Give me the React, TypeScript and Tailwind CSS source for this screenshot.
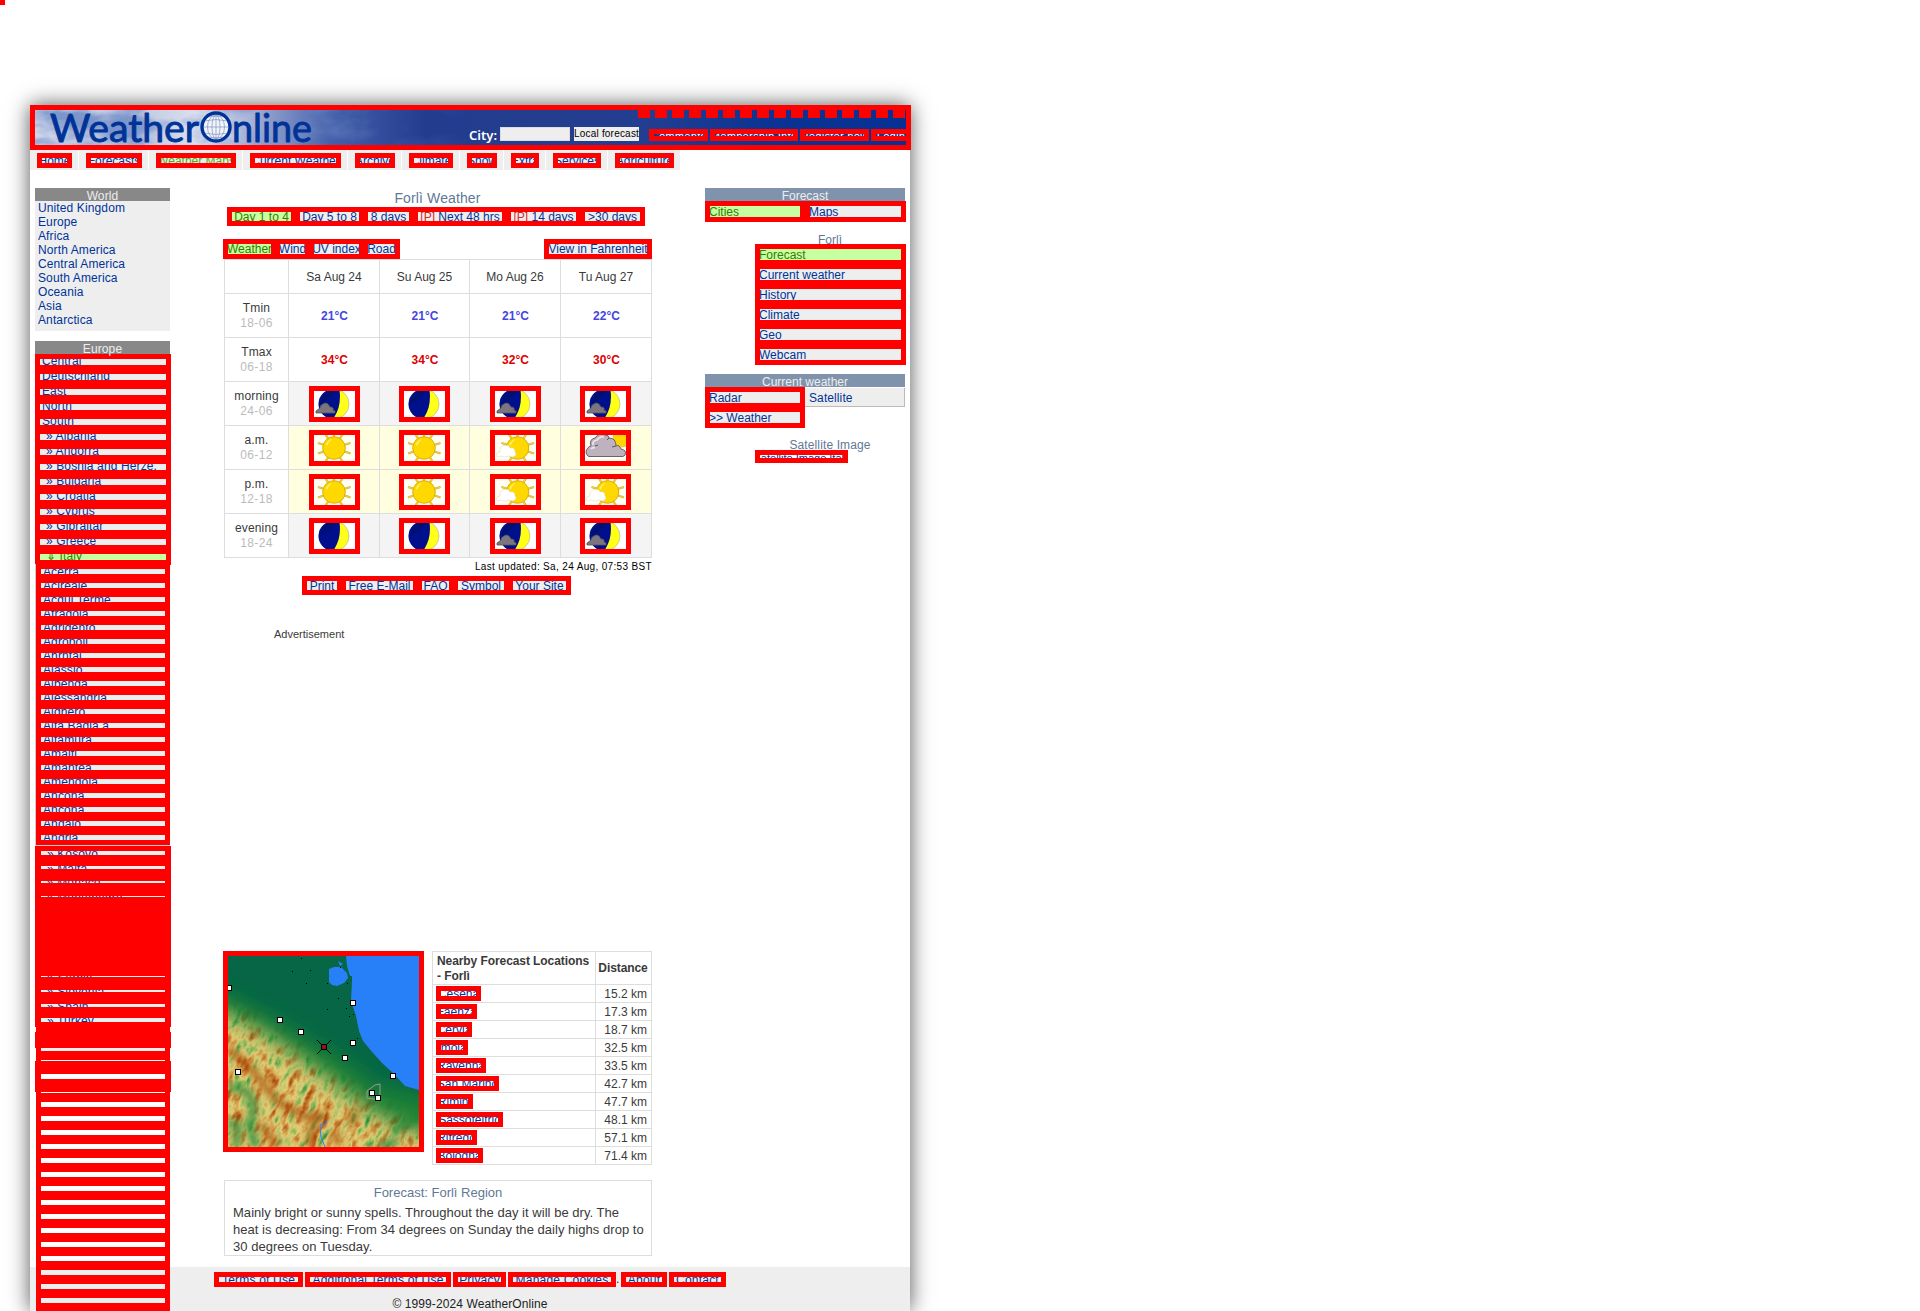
import React from 'react';

type BoxProps = { className?: string; inner?: string; bg?: string; children?: React.ReactNode };

/* Red-framed link; its label is clipped by the frame. */
function Box({ className = '', inner = '', bg = 'bg-[#eee]', children }: BoxProps) {
  return (
    <div className={`flex shrink-0 items-center overflow-hidden border-[5px] border-[#ff0000] ${bg} ${className}`}>
      <span className={`shrink-0 leading-[14px] whitespace-pre ${inner}`}>{children}</span>
    </div>
  );
}

function Strip({ className = '', bg = 'bg-[#eee]', children }: BoxProps) {
  return (
    <div className={`flex shrink-0 items-center justify-center overflow-hidden ${bg} ${className}`}>
      <span className="shrink-0 leading-[14px] whitespace-pre">{children}</span>
    </div>
  );
}

const nav: [string, string, string][] = [
  ['w-[48px]', 'w-[35px]', 'Home'],
  ['w-[69px]', 'w-[56px]', 'Forecasts'],
  ['w-[93px]', 'w-[80px]', 'Weather Maps'],
  ['w-[104px]', 'w-[91px]', 'Current Weather'],
  ['w-[53px]', 'w-[40px]', 'Archive'],
  ['w-[57px]', 'w-[44px]', 'Climate'],
  ['w-[43px]', 'w-[30px]', 'Snow'],
  ['w-[41px]', 'w-[28px]', 'Extra'],
  ['w-[61px]', 'w-[48px]', 'Services'],
  ['w-[72px]', 'w-[59px]', 'Agriculture'],
];

function Logo() {
  return (
    <svg className="h-[35px] w-[871px]" viewBox="0 0 871 35" preserveAspectRatio="none">
      <defs>
        <linearGradient id="sky" x1="0" x2="1" y1="0" y2="0">
          <stop offset="0" stopColor="#dbe0ee" />
          <stop offset="0.1" stopColor="#b9c3df" />
          <stop offset="0.2" stopColor="#dfe4f1" />
          <stop offset="0.27" stopColor="#8c9bcb" />
          <stop offset="0.34" stopColor="#4460ab" />
          <stop offset="0.45" stopColor="#233c8e" />
          <stop offset="0.7" stopColor="#233e90" />
          <stop offset="0.85" stopColor="#0a3393" />
          <stop offset="1" stopColor="#063192" />
        </linearGradient>
        <linearGradient id="fade" x1="0" x2="1" y1="0" y2="0">
          <stop offset="0.1" stopColor="#fff" />
          <stop offset="0.5" stopColor="#000" />
        </linearGradient>
        <mask id="cloudMask"><rect width="871" height="35" fill="url(#fade)" /></mask>
        <filter id="clouds" x="0" y="0" width="100%" height="100%">
          <feTurbulence type="fractalNoise" baseFrequency="0.018 0.035" numOctaves="4" seed="8" />
          <feColorMatrix values="0 0 0 0 0.2  0 0 0 0 0.3  0 0 0 0 0.6  3.4 0 0 0 -1.4" />
        </filter>
        <clipPath id="globe"><circle cx="181" cy="17" r="12" /></clipPath>
      </defs>
      <rect width="871" height="35" fill="url(#sky)" />
      <rect width="871" height="35" filter="url(#clouds)" mask="url(#cloudMask)" />
      <circle cx="181" cy="17" r="13" fill="#f1f4fa" />
      <g clipPath="url(#globe)" fill="none" stroke="#8392c0" strokeWidth="0.7">
        <ellipse cx="181" cy="17" rx="4" ry="12" />
        <ellipse cx="181" cy="17" rx="8.5" ry="12" />
        <path d="M181 4V30M168 17H194M169 11Q181 8 193 11M169 23Q181 26 193 23M172 7Q181 5 190 7M172 27Q181 29 190 27" />
      </g>
      <circle cx="181" cy="17" r="14" fill="none" stroke="#003397" strokeWidth="3.4" />
      <g fill="#003397" stroke="#003397" strokeWidth="0.9" strokeLinejoin="round" fontFamily="Lato" fontSize="38">
        <text x="15" y="32.4" textLength="149" lengthAdjust="spacingAndGlyphs">Weather</text>
        <text x="197" y="32.4" textLength="80" lengthAdjust="spacingAndGlyphs">nline</text>
      </g>
    </svg>
  );
}

function Header() {
  return (
    <header className="relative h-[45px] w-[881px] shrink-0 border-[5px] border-[#ff0000] text-white">
      <Logo />
      <div className="absolute top-0 right-px flex gap-[5px]">
        {Array.from({ length: 16 }, (_, i) => <i key={i} className="h-2 w-3 bg-[#ff0000]" />)}
      </div>
      <div className="absolute top-[17px] left-[434px] flex items-start">
        <b className="w-[31px] font-['Noto_Sans'] text-[13px] leading-[17px] font-semibold whitespace-nowrap">City:</b>
        <div className="h-[14px] w-[70px] border border-[#ddd] bg-[#eee]" />
        <div className="ml-1 h-[14px] w-[65px] bg-[#eee] text-[10px] leading-[14px] tracking-[0.2px] whitespace-nowrap text-black">Local forecast</div>
      </div>
      <div className="absolute top-[19px] left-[614px] flex w-[257px] gap-[2px] overflow-hidden text-[11px] tracking-[0.3px]">
        {[['w-[59px]', 'Comments'], ['w-[88px]', 'Membership Info'], ['w-[69px]', 'Register now'], ['w-[40px]', 'Login']].map(([w, t]) => (
          <Box key={t} bg="bg-[#103592]" className={`h-3 justify-center ${w}`} inner="translate-y-px">{t}</Box>
        ))}
      </div>
    </header>
  );
}

const world = ['United Kingdom', 'Europe', 'Africa', 'North America', 'Central America', 'South America', 'Oceania', 'Asia', 'Antarctica'];
const europe = ['Central', 'Deutschland', 'East', 'North', 'South', '» Albania', '» Andorra', '» Bosnia and Herze.', '» Bulgaria', '» Croatia', '» Cyprus', '» Gibraltar', '» Greece', '⇓ Italy'];
const cities = ['Acerra', 'Acireale', 'Acqui Terme', 'Afragola', 'Agrigento', 'Agropoli', 'Ahrntal', 'Alassio', 'Albenga', 'Alessandria', 'Alghero', 'Alta Badia a', 'Altamura', 'Amalfi', 'Amantea', 'Amendola', 'Ancona', 'Ancona', 'Andalo', 'Andria'];

/* Overlapping rows further down: [spacing above, strip height, label]. */
const overlap: [string, string, string][] = [
  ['mt-[5px]', 'h-[4px]', '» Kosovo'],
  ['mt-[11px]', 'h-[3px]', '» Malta'],
  ['mt-[12px]', 'h-[2px]', '» Monaco'],
  ['mt-[13px]', 'h-px', '» Montenegro'],
  ['mt-[79px]', 'h-px', '» Serbia'],
  ['mt-[13px]', 'h-[2px]', '» Slovenia'],
  ['mt-[12px]', 'h-[3px]', '» Spain'],
  ['mt-[11px]', 'h-[4px]', '» Turkey'],
];

function Sidebar() {
  return (
    <aside className="relative z-10 w-[136px] shrink-0 tracking-[0.12px] text-[#003399]">
      <h3 className="h-[13px] w-[135px] bg-[#888] text-center leading-[16px] text-[#eee]">World</h3>
      <ul className="h-[130px] w-[135px] bg-[#eee] pl-[3px] leading-[14px]">
        {world.map((t) => <li key={t}>{t}</li>)}
      </ul>
      <h3 className="mt-[10px] h-[13px] w-[135px] bg-[#888] text-center leading-[16px] text-[#eee]">Europe</h3>
      {europe.map((t, i) => (
        <Box
          key={t}
          bg={i === 13 ? 'bg-[#c8ffa0]' : 'bg-[#eee]'}
          className={`-mb-px h-4 w-[136px] ${i === 13 ? 'text-[#338000]' : ''}`}
          inner={`-translate-y-px ${i > 4 ? 'pl-[6px]' : 'pl-[2px]'}`}
        >
          {t}
        </Box>
      ))}
      <div className="relative h-[282px] w-[135px] bg-[#ccc] pl-px">
        {cities.map((t, i) => (
          <Box key={i} className="-mb-px h-[15px] w-[134px]" inner="pl-[2px]">{t}</Box>
        ))}
      </div>
      <div className="flex h-[181px] w-[136px] flex-col bg-[#ff0000] px-[6px]">
        {overlap.map(([mt, h, t]) => (
          <div key={t} className={`flex w-[124px] shrink-0 items-center overflow-hidden bg-[#eee] ${mt} ${h}`}>
            <span className="shrink-0 translate-y-px pl-[6px] leading-[14px] whitespace-pre">{t}</span>
          </div>
        ))}
      </div>
      <div className="ml-px h-[5px] w-[134px] bg-[#ff0000]" />
      <div className="h-4 w-[136px] bg-[#ff0000]" />
      <div className="ml-px flex h-[13px] w-[134px] flex-col justify-between bg-[#ff0000] px-[5px]">
        <i className="h-[3px] bg-[#eee]" />
        <i className="h-px bg-white" />
      </div>
      <div className="h-[31px] w-[136px] bg-[#ff0000] px-[6px] pt-[13px]"><i className="block h-[5px] bg-white" /></div>
      <div className="ml-px h-[10px] w-[134px] bg-[#ff0000] px-[5px]"><i className="block h-px bg-white" /></div>
      {Array.from({ length: 15 }, (_, i) => (
        <div key={i} className="ml-px h-[14px] w-[134px] bg-[#ff0000] px-[5px]">
          <i className={`block h-[5px] ${i > 11 ? 'bg-[#eee]' : 'bg-white'}`} />
        </div>
      ))}
    </aside>
  );
}

type Kind = 'moon' | 'mooncloud' | 'sun' | 'suncloud' | 'cloudy';

const rays = 'M20 13L4 8M20 13L4 18.5M20 13L36.5 8M20 13L36.5 18.5M20 13L10 -3M20 13V-3M20 13L30 -3M20 13L10 29M20 13L30 29';

function WeatherIcon({ kind }: { kind: Kind }) {
  const night = kind === 'moon' || kind === 'mooncloud';
  return (
    <svg viewBox="0 0 41 26" className={`h-[26px] w-[41px] ${night ? 'bg-white' : 'bg-[#fffff4]'}`}>
      {night && (
        <>
          <circle cx="20" cy="13" r="15" fill="#ffff18" stroke="#b8b8a0" strokeWidth="0.7" />
          <path d="M25.5 -1C27 10 25 20 19 28A15 15 0 0 1 20 -2Z" fill="#00108c" />
          <path d="M10 3Q16 -2 23 0L13 9L6 13Z" fill="#001060" opacity="0.6" />
          {kind === 'mooncloud' && (
            <path d="M2 22V20L6 17Q6 14 9 13Q11 11 14 13L16 16Q20 16 19 19L21 20V22Z" fill="#7d757d" stroke="#555" strokeWidth="0.8" />
          )}
        </>
      )}
      {(kind === 'sun' || kind === 'suncloud') && (
        <g transform={kind === 'suncloud' ? 'translate(2.5 0)' : ''}>
          <path d={rays} stroke="#b9ad80" strokeWidth="2.2" />
          <path d={rays} stroke="#ffd400" strokeWidth="1.3" />
          <circle cx="20" cy="13" r="11.3" fill="#ffd800" stroke="#cfa500" strokeWidth="0.8" />
          <path d="M12 9Q14 5 18 4Q14 7 13 11Z" fill="#fff27a" />
        </g>
      )}
      {kind === 'suncloud' && (
        <path d="M1 21Q1 17 5 17Q4 12 8 11Q14 9 15 13Q20 12 20 17Q22 19 20 21Q17 23 14 21Q9 23.5 6 21Q2 23 1 21Z" fill="#fff" stroke="#ddd2b0" strokeWidth="0.5" />
      )}
      {kind === 'cloudy' && (
        <>
          <circle cx="37" cy="3" r="9" fill="#ffd400" stroke="#c9b060" strokeWidth="0.6" />
          <path d="M3 21Q-1 17 3 13Q4 11 6 11Q4 4 10 3Q14 -3 20 0Q24 0 24 3Q31 3 31 11Q34 9 36 14Q42 15 40 20L38 21.5H4Z" fill="#bdb2bd" stroke="#5d555d" strokeWidth="0.9" />
          <path d="M8 10Q7 6 12 5Q15 1 19 2M6 14Q8 12 10 13" stroke="#eee6ee" strokeWidth="1.6" fill="none" />
          <path d="M24 3L22 5M31 11L27 12M10 11L13 10" stroke="#5d555d" fill="none" />
        </>
      )}
    </svg>
  );
}

const rows: { name: string; hours: string; bg: string; icons: Kind[] }[] = [
  { name: 'morning', hours: '24-06', bg: 'bg-[#f4f4f4]', icons: ['mooncloud', 'moon', 'mooncloud', 'mooncloud'] },
  { name: 'a.m.', hours: '06-12', bg: 'bg-[#ffffe0]', icons: ['sun', 'sun', 'suncloud', 'cloudy'] },
  { name: 'p.m.', hours: '12-18', bg: 'bg-[#ffffe0]', icons: ['sun', 'sun', 'suncloud', 'suncloud'] },
  { name: 'evening', hours: '18-24', bg: 'bg-[#f4f4f4]', icons: ['moon', 'moon', 'mooncloud', 'mooncloud'] },
];

const gridCols = 'grid grid-cols-[64px_91px_90px_91px_91px]';
const cell = 'flex items-center justify-center border-t border-l border-[#ddd]';

function RowHead({ name, hours }: { name: string; hours: string }) {
  return (
    <div className={`${cell} flex-col pt-px leading-[15px] tracking-[0.15px]`}>
      <span>{name}</span>
      <span className="tracking-[0.4px] text-[#bbb]">{hours}</span>
    </div>
  );
}

function ForecastTable() {
  return (
    <div className="w-[428px] border-r border-b border-[#ddd]">
      <div className={`${gridCols} h-[34px]`}>
        {['', 'Sa Aug 24', 'Su Aug 25', 'Mo Aug 26', 'Tu Aug 27'].map((t) => <div key={t} className={`${cell} pt-px`}>{t}</div>)}
      </div>
      <div className={`${gridCols} h-11`}>
        <RowHead name="Tmin" hours="18-06" />
        {[21, 21, 21, 22].map((t, i) => <div key={i} className={`${cell} pt-px pl-px font-bold text-[#4646dd]`}>{t}°C</div>)}
      </div>
      <div className={`${gridCols} h-11`}>
        <RowHead name="Tmax" hours="06-18" />
        {[34, 34, 32, 30].map((t, i) => <div key={i} className={`${cell} pt-px pl-px font-bold text-[#dd0000]`}>{t}°C</div>)}
      </div>
      {rows.map((r) => (
        <div key={r.name} className={`${gridCols} h-11`}>
          <RowHead name={r.name} hours={r.hours} />
          {r.icons.map((k, i) => (
            <div key={i} className={`${cell} ${r.bg} pt-px ${i === 3 ? 'pr-px' : ''}`}>
              <div className="border-[5px] border-[#ff0000]"><WeatherIcon kind={k} /></div>
            </div>
          ))}
        </div>
      ))}
    </div>
  );
}

const markers = [[1, 32], [52, 64], [73, 76], [125, 47], [125, 87], [117, 102], [165, 120], [144, 137], [150, 142], [10, 116]];

function TerrainMap() {
  return (
    <svg viewBox="0 0 191 191" className="h-[201px] w-[201px] shrink-0 border-[5px] border-[#ff0000]">
      <defs>
        <filter id="terrain" x="0" y="0" width="100%" height="100%" colorInterpolationFilters="sRGB">
          <feTurbulence type="fractalNoise" baseFrequency="0.06 0.13" numOctaves="4" seed="5" />
          <feColorMatrix values="1.3 0 0 0 -0.12  1.3 0 0 0 -0.12  1.3 0 0 0 -0.12  0 0 0 0 1" />
          <feComponentTransfer>
            <feFuncR type="table" tableValues="0.15 0.4 0.68 0.89 0.83 0.74 0.6" />
            <feFuncG type="table" tableValues="0.55 0.65 0.76 0.81 0.63 0.42 0.25" />
            <feFuncB type="table" tableValues="0.25 0.3 0.4 0.47 0.3 0.15 0" />
          </feComponentTransfer>
        </filter>
        <filter id="soft" x="-30%" y="-30%" width="160%" height="160%"><feGaussianBlur stdDeviation="10" /></filter>
        <filter id="soft2" x="-50%" y="-50%" width="200%" height="200%"><feGaussianBlur stdDeviation="3.5" /></filter>
        <mask id="hills"><path d="M-40 48L0 58L40 80L70 101L105 126L150 160L230 190V250H-40Z" fill="#fff" filter="url(#soft)" /></mask>
      </defs>
      <rect width="191" height="191" fill="#066645" />
      <path d="M-30 20L0 40L45 62L80 84L115 104L150 130L220 146V230H-30Z" fill="#1d8236" filter="url(#soft)" />
      <g mask="url(#hills)">
        <g transform="rotate(115 95 95)"><rect x="-60" y="-60" width="310" height="310" filter="url(#terrain)" /></g>
        <g filter="url(#soft2)" fill="none" stroke="#a14408" strokeOpacity="0.75" strokeWidth="7">
          <path d="M0 92L25 115L50 146L75 160L100 162M33 168L50 191M128 155L122 170M80 191L90 155M105 175L112 188" />
        </g>
        <g filter="url(#soft2)" fill="none" stroke="#378f3f" strokeOpacity="0.9" strokeWidth="8">
          <path d="M0 130L20 136L26 150L22 170L28 191M0 165L10 170L8 191" />
          <path d="M165 175L191 160M150 191L170 185" />
        </g>
      </g>
      <path d="M118 0L119 10L122 20L124 20V25L123 45L128 60L131 75L135 85L145 97L155 108L165 117L177 130L191 134V0Z" fill="#2880f8" />
      <path d="M101 13L106 11H113L119 17L120 22L116 27L109 30L104 29L101 26ZM110 5L115 8L112 10Z" fill="#2880f8" />
      <path d="M97 191L93 181L92 169L97 168L99 164" fill="none" stroke="#2880f8" />
      <path d="M152 142V128L147 129L139 135V142L152 144" fill="none" stroke="#999" />
      <path d="M73 2h1v1h-1zM64 15h1v1h-1zM82 14h1v1h-1zM78 27h1v1h-1zM99 27h1v1h-1zM110 42h1v1h-1zM99 53h1v1h-1zM118 52h1v1h-1zM121 60h1v1h-1zM125 58h1v1h-1zM129 82h1v1h-1zM119 27h1v1h-1zM112 11h1v1h-1z" fill="#000" />
      <path d="M89 84L103 98M103 84L89 98" stroke="#000" />
      <rect x="93.5" y="88.5" width="5" height="5" fill="#a01010" stroke="#000" />
      {markers.map(([x, y], i) => <rect key={i} x={x - 2.5} y={y - 2.5} width="5" height="5" fill="#fff" stroke="#000" />)}
    </svg>
  );
}

const nearby: [string, string, string][] = [
  ['w-[45px]', 'Cesena', '15.2'], ['w-[41px]', 'Faenza', '17.3'], ['w-[36px]', 'Cervia', '18.7'], ['w-[32px]', 'Imola', '32.5'],
  ['w-[50px]', 'Ravenna', '33.5'], ['w-[63px]', 'San Marino', '42.7'], ['w-[37px]', 'Rimini', '47.7'],
  ['w-[67px]', 'Sassofeltrio', '48.1'], ['w-[41px]', 'Rifredo', '57.1'], ['w-[47px]', 'Bologna', '71.4'],
];

function NearbyTable() {
  return (
    <div className="ml-2 w-[220px] border-r border-b border-[#ddd]">
      <div className="grid h-[33px] grid-cols-[163px_56px] leading-[15px] font-bold tracking-[-0.08px]">
        <div className="border-t border-l border-[#ddd] pt-[2px] pl-1 whitespace-nowrap">Nearby Forecast Locations<br />- Forlì</div>
        <div className="flex items-center justify-center border-t border-l border-[#ddd] pr-px">Distance</div>
      </div>
      {nearby.map(([w, t, km]) => (
        <div key={t} className="grid h-[18px] grid-cols-[163px_56px]">
          <div className="border-t border-l border-[#ddd] pt-px pl-[3px]">
            <Box bg="bg-white" className={`h-[15px] justify-center text-[#003399] ${w}`}>{t}</Box>
          </div>
          <div className="border-t border-l border-[#ddd] pr-1 text-right leading-[18px]">{km} km</div>
        </div>
      ))}
    </div>
  );
}

function Center() {
  return (
    <main className="w-[430px] shrink-0">
      <h1 className="h-[19px] pr-px text-center text-[14px] leading-[21px] tracking-[0.12px] text-[#5f7896]">Forlì Weather</h1>
      <div className="ml-1 flex h-[19px] w-[418px] gap-[9px] border-[5px] border-[#ff0000] bg-[#ff0000] text-[#003399]">
        <Strip bg="bg-[#c8ffa0]" className="w-[59px] text-[#338000]">Day 1 to 4</Strip>
        <Strip className="w-[59px]">Day 5 to 8</Strip>
        <Strip className="w-[41px]">8 days</Strip>
        <Strip className="w-[84px]"><span className="text-[#dd2222]">[P]</span> Next 48 hrs</Strip>
        <Strip className="w-[65px]"><span className="text-[#dd2222]">[P]</span> 14 days</Strip>
        <Strip className="w-[55px]">&gt;30 days</Strip>
      </div>
      <div className="mt-[13px] flex h-5 w-[429px] justify-between text-[#003399]">
        <div className="flex w-[177px] gap-[9px] border-[5px] border-[#ff0000] bg-[#ff0000]">
          <Strip bg="bg-[#c8ffa0]" className="w-[43px] text-[#338000]">Weather</Strip>
          <Strip className="w-[25px]">Wind</Strip>
          <Strip className="w-[45px]">UV index</Strip>
          <Strip className="w-[27px]">Road</Strip>
        </div>
        <Box className="w-[108px] justify-center">View in Fahrenheit</Box>
      </div>
      <div className="ml-px">
        <ForecastTable />
        <p className="h-[18px] w-[428px] text-right text-[10px] leading-[17px] tracking-[0.34px] whitespace-nowrap text-black">Last updated: Sa, 24 Aug, 07:53 BST</p>
      </div>
      <div className="ml-[79px] flex h-[19px] w-[269px] gap-[9px] border-[5px] border-[#ff0000] bg-[#ff0000] text-[#003399]">
        <Strip className="w-[30px]">Print</Strip>
        <Strip className="w-[67px]">Free E-Mail</Strip>
        <Strip className="w-[27px]">FAQ</Strip>
        <Strip className="w-[46px]">Symbol</Strip>
        <Strip className="w-[53px]">Your Site</Strip>
      </div>
      <p className="mt-[32px] ml-[51px] h-[324px] text-[11px] leading-[14px]">Advertisement</p>
      <div className="flex items-start">
        <TerrainMap />
        <NearbyTable />
      </div>
      <section className="mt-[15px] ml-px h-[76px] w-[428px] border border-[#ddd] pl-2 text-[13px]">
        <h2 className="pt-[3px] pr-2 text-center leading-[17px] text-[#5f7896]">Forecast: Forlì Region</h2>
        <p className="pt-[3px] leading-[17px] tracking-[0.035px] whitespace-nowrap">
          Mainly bright or sunny spells. Throughout the day it will be dry. The<br />
          heat is decreasing: From 34 degrees on Sunday the daily highs drop to<br />
          30 degrees on Tuesday.
        </p>
      </section>
    </main>
  );
}

function Right() {
  return (
    <aside className="w-[201px] shrink-0 text-[#003399]">
      <h3 className="h-[13px] w-[200px] bg-[#7f93ad] text-center leading-[16px] text-[#eee]">Forecast</h3>
      <div className="flex h-[21px] gap-[10px] border-[5px] border-[#ff0000] bg-[#ff0000] leading-[13px] -indent-px">
        <span className="w-[90px] overflow-hidden bg-[#c8ffa0] text-[#338000]">Cities</span>
        <span className="flex-1 overflow-hidden bg-[#eee]">Maps</span>
      </div>
      <p className="mt-[10px] ml-[50px] h-3 w-[150px] text-center leading-[16px] text-[#5f7896]">Forlì</p>
      <div className="relative ml-[50px] flex h-[121px] flex-col gap-[9px] border-[5px] border-[#ff0000] bg-[#ff0000] leading-[13px] -indent-px">
        {['Forecast', 'Current weather', 'History', 'Climate', 'Geo', 'Webcam'].map((t, i) => (
          <span key={t} className={`h-[11px] overflow-hidden ${i === 0 ? 'bg-[#c8ffa0] text-[#338000]' : 'bg-[#eee]'}`}>{t}</span>
        ))}
      </div>
      <h3 className="mt-[9px] h-[13px] w-[200px] bg-[#7f93ad] text-center leading-[16px] text-[#eee]">Current weather</h3>
      <div className="flex h-[41px]">
        <div className="flex w-[100px] flex-col gap-[9px] border-[5px] border-[#ff0000] bg-[#ff0000] leading-[13px] -indent-px">
          <span className="h-[11px] overflow-hidden bg-[#eee]">Radar</span>
          <span className="h-[11px] overflow-hidden bg-[#eee]">&gt;&gt; Weather</span>
        </div>
        <div className="mt-px h-[19px] w-[100px] border-r border-b border-[#bbb] bg-[#eee] pl-1 leading-[20px] tracking-[0.1px]">Satellite</div>
      </div>
      <p className="mt-[10px] ml-[50px] h-3 w-[150px] text-center leading-[15px] tracking-[0.12px] text-[#5f7896]">Satellite Image</p>
      <Box bg="bg-white" className="ml-[50px] h-[13px] w-[93px] justify-center text-[11px]" inner="translate-y-px">Satellite Image Italy</Box>
    </aside>
  );
}

export default function App() {
  return (
    <div className="relative h-[1311px] w-full overflow-hidden bg-white pt-[105px] pl-[30px] font-['Liberation_Sans',sans-serif] text-[12px] text-[#3a3a3a]">
      <i className="absolute top-0 left-0 h-[5px] w-[5px] bg-[#ff0000]" />
      <div className="flex h-[1206px] w-[880px] flex-col bg-white shadow-[0_0_20px_#555]">
        <Header />
        <nav className="flex h-5 shrink-0 gap-px text-[#003399]">
          {nav.map(([w, bw, t], i) => (
            <div key={t} className={`h-5 shrink-0 bg-[#eee] pt-[3px] pl-[7px] ${w}`}>
              <Box className={`h-[15px] justify-center ${bw} ${i === 2 ? 'text-[#55aa11]' : ''}`}>{t}</Box>
            </div>
          ))}
        </nav>
        <div className="flex h-[1097px] shrink-0 items-start pt-[18px] pl-[5px]">
          <Sidebar />
          <div className="w-[52px] shrink-0" />
          <Center />
          <div className="w-[52px] shrink-0" />
          <Right />
        </div>
        <footer className="h-[44px] shrink-0 bg-[#eee] pt-[5px] pl-[184px]">
          <div className="flex gap-[2px] text-[#003399]">
            {[['w-[89px]', 'Terms of Use'], ['w-[146px]', 'Additional Terms of Use'], ['w-[53px]', 'Privacy'], ['w-[108px]', 'Manage Cookies']].map(([w, t]) => (
              <Box key={t} className={`h-[15px] justify-center tracking-[0.2px] ${w}`}>{t}</Box>
            ))}
            <span className="-ml-[2px] w-[3px] leading-[15px]">.</span>
            <Box className="h-[15px] w-[46px] justify-center tracking-[0.2px]">About</Box>
            <Box className="h-[15px] w-[57px] justify-center tracking-[0.2px]">Contact</Box>
          </div>
          <p className="-ml-[184px] pt-[10px] text-center leading-[14px] tracking-[0.1px] text-[#222]">© 1999-2024 WeatherOnline</p>
        </footer>
      </div>
    </div>
  );
}
